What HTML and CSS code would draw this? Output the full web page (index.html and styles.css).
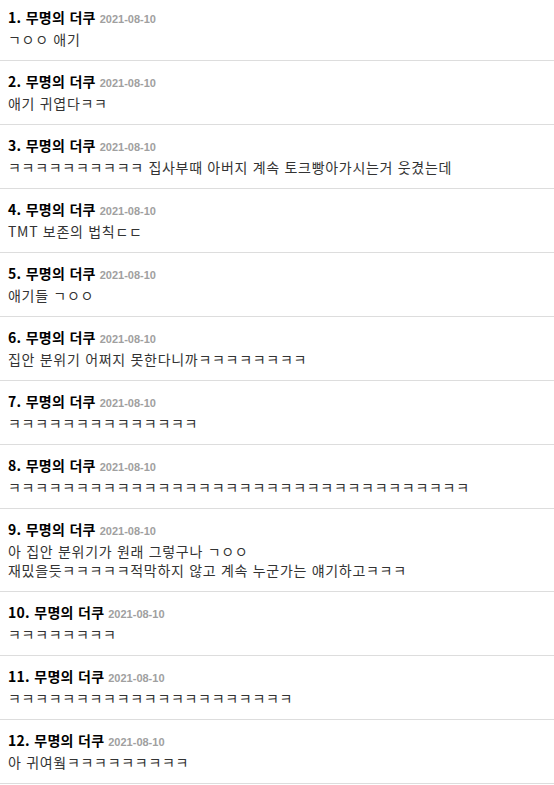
FILE: index.html
```html
<!DOCTYPE html>
<html lang="ko">
<head>
  <meta charset="UTF-8"/>
  <meta name="viewport" content="width=device-width,initial-scale=1"/>
  <title>댓글</title>
  <link rel="stylesheet" href="styles.css">
</head>
<body>

  <ul class="comments">
    <li class="comment">
      <div class="comment-head"><span class="comment-name">1. 무명의 더쿠</span> <span class="comment-date">2021-08-10</span></div>
      <div class="comment-body">ㄱㅇㅇ 애기</div>
    </li>
    <li class="comment">
      <div class="comment-head"><span class="comment-name">2. 무명의 더쿠</span> <span class="comment-date">2021-08-10</span></div>
      <div class="comment-body">애기 귀엽다ㅋㅋ</div>
    </li>
    <li class="comment">
      <div class="comment-head"><span class="comment-name">3. 무명의 더쿠</span> <span class="comment-date">2021-08-10</span></div>
      <div class="comment-body">ㅋㅋㅋㅋㅋㅋㅋㅋㅋㅋ 집사부때 아버지 계속 토크빵아가시는거 웃겼는데</div>
    </li>
    <li class="comment">
      <div class="comment-head"><span class="comment-name">4. 무명의 더쿠</span> <span class="comment-date">2021-08-10</span></div>
      <div class="comment-body">TMT 보존의 법칙ㄷㄷ</div>
    </li>
    <li class="comment">
      <div class="comment-head"><span class="comment-name">5. 무명의 더쿠</span> <span class="comment-date">2021-08-10</span></div>
      <div class="comment-body">애기들 ㄱㅇㅇ</div>
    </li>
    <li class="comment">
      <div class="comment-head"><span class="comment-name">6. 무명의 더쿠</span> <span class="comment-date">2021-08-10</span></div>
      <div class="comment-body">집안 분위기 어쩌지 못한다니까ㅋㅋㅋㅋㅋㅋㅋㅋ</div>
    </li>
    <li class="comment">
      <div class="comment-head"><span class="comment-name">7. 무명의 더쿠</span> <span class="comment-date">2021-08-10</span></div>
      <div class="comment-body">ㅋㅋㅋㅋㅋㅋㅋㅋㅋㅋㅋㅋㅋㅋ</div>
    </li>
    <li class="comment">
      <div class="comment-head"><span class="comment-name">8. 무명의 더쿠</span> <span class="comment-date">2021-08-10</span></div>
      <div class="comment-body">ㅋㅋㅋㅋㅋㅋㅋㅋㅋㅋㅋㅋㅋㅋㅋㅋㅋㅋㅋㅋㅋㅋㅋㅋㅋㅋㅋㅋㅋㅋㅋㅋㅋㅋ</div>
    </li>
    <li class="comment">
      <div class="comment-head"><span class="comment-name">9. 무명의 더쿠</span> <span class="comment-date">2021-08-10</span></div>
      <div class="comment-body">아 집안 분위기가 원래 그렇구나 ㄱㅇㅇ<br>재밌을듯ㅋㅋㅋㅋㅋ적막하지 않고 계속 누군가는 얘기하고ㅋㅋㅋ</div>
    </li>
    <li class="comment">
      <div class="comment-head"><span class="comment-name">10. 무명의 더쿠</span> <span class="comment-date">2021-08-10</span></div>
      <div class="comment-body">ㅋㅋㅋㅋㅋㅋㅋㅋ</div>
    </li>
    <li class="comment">
      <div class="comment-head"><span class="comment-name">11. 무명의 더쿠</span> <span class="comment-date">2021-08-10</span></div>
      <div class="comment-body">ㅋㅋㅋㅋㅋㅋㅋㅋㅋㅋㅋㅋㅋㅋㅋㅋㅋㅋㅋㅋㅋ</div>
    </li>
    <li class="comment">
      <div class="comment-head"><span class="comment-name">12. 무명의 더쿠</span> <span class="comment-date">2021-08-10</span></div>
      <div class="comment-body">아 귀여웤ㅋㅋㅋㅋㅋㅋㅋㅋㅋ</div>
    </li>
  </ul>

</body>
</html>
```

FILE: styles.css
```css
body {
  margin: 0;
  background: #fff;
  color: #333;
  font-family: "Noto Sans CJK KR", "Noto Sans", sans-serif;
  font-size: 14px;
}

.comments {
  list-style: none;
  margin: 0;
  padding: 0;
  margin-top: -3px;
}

.comment {
  padding: 10px 8px 11px;
  border-bottom: 1px solid #ddd;
}

.comment-head {
  line-height: 20px;
  height: 20px;
}

.comment-name {
  font-weight: bold;
  color: #000;
  letter-spacing: 0.3px;
}

.comment-date {
  font-family: "Liberation Sans", Arial, sans-serif;
  font-size: 11px;
  font-weight: bold;
  color: #a0a0a0;
  line-height: 1;
}

.comment-body {
  margin-top: 3px;
  line-height: 19px;
  color: #333;
  letter-spacing: 0.7px;
}
```
